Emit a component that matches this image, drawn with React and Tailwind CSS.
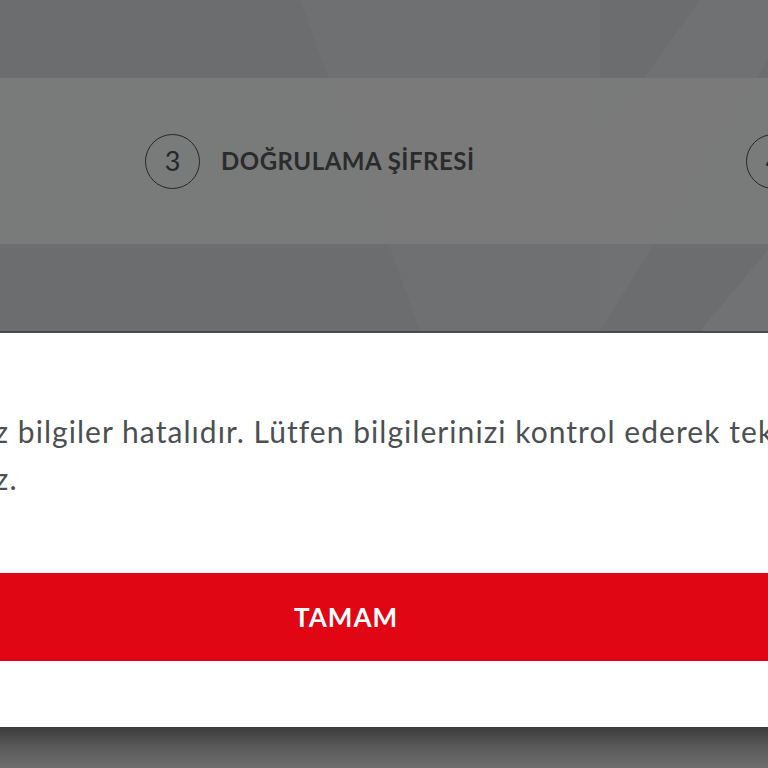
import React from 'react';

function StepCircle({ label, className = "" }) {
    return (
        <div className={`w-[55px] h-[55px] rounded-full border-[1.5px] border-[#262728] flex items-center justify-center shrink-0 text-[27px] text-[#262728] ${className}`}>
            {label}
        </div>
    );
}

export default function App() {
    return (
        <div className="w-[768px] h-[768px] overflow-hidden relative bg-[#6c6d6f] flex flex-col" style={{ fontFamily: 'Lato, "Noto Sans", sans-serif' }}>
            {/* faint polygon pattern of the dimmed page */}
            <svg className="absolute inset-0 pointer-events-none" width="768" height="768" viewBox="0 0 768 768">
                <polygon points="300,0 600,0 600,331 420,331" fill="#ffffff" opacity="0.025" />
                <polygon points="700,0 768,0 768,60 600,331 600,140" fill="#ffffff" opacity="0.03" />
                <polygon points="768,250 768,331 700,331" fill="#ffffff" opacity="0.04" />
            </svg>

            <div className="h-[78px] shrink-0" />

            <div className="h-[166px] shrink-0 bg-[#7b7b7b]/90 flex items-center relative whitespace-nowrap">
                <StepCircle label="3" className="ml-[145px]" />
                <span className="ml-[21px] w-[252px] shrink-0 text-[24px] font-bold tracking-[0.5px] text-[#2a2b2c]">DOĞRULAMA ŞİFRESİ</span>
                <StepCircle label="4" className="ml-[273px]" />
            </div>

            <div className="h-[87px] shrink-0" />

            <div className="h-[2px] shrink-0 bg-[#4b4b4c]" />

            <div className="-ml-[165px] w-[1022px] shrink-0 bg-white px-[40px] pt-[75px] pb-[66px] relative">
                <p className="text-[30px] leading-[47px] tracking-[1.05px] text-[#4b5053] whitespace-nowrap">
                    Girdiğiniz bilgiler hatalıdır. Lütfen bilgilerinizi kontrol ederek tekrar
                    <br />
                    deneyiniz.
                </p>
                <button className="mt-[71px] w-full h-[88px] bg-[#e10613] text-white text-[26px] font-bold tracking-[1px]">
                    TAMAM
                </button>
            </div>

            <div className="flex-1 bg-gradient-to-b from-[#3c3c3d] via-[#5a5a5b] to-[#6e6e6f]" />
        </div>
    );
}
